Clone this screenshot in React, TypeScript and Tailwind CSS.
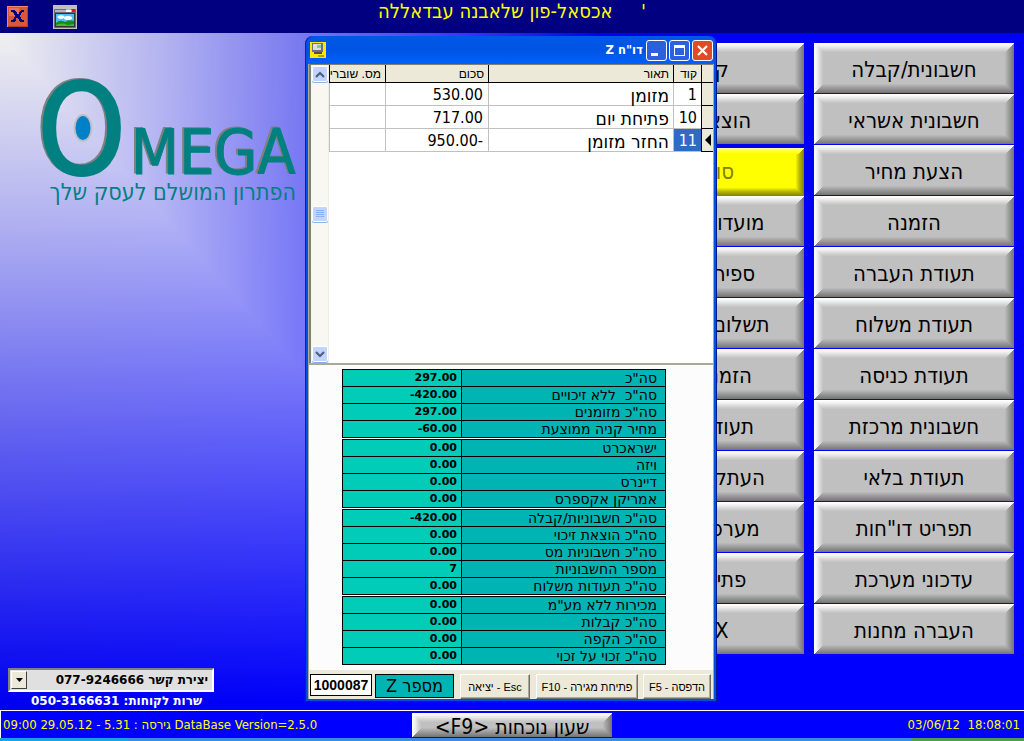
import React from "react";

const bevelGray =
  "bg-[#c0c0c0] shadow-[inset_1px_1px_0_#ffffff,inset_-1px_-1px_0_#777777,inset_2px_2px_0_#f9f9f9,inset_-2px_-2px_0_#7f7f7f,inset_3px_3px_0_#f3f3f3,inset_-3px_-3px_0_#878787,inset_4px_4px_0_#ececec,inset_-4px_-4px_0_#8f8f8f,inset_5px_5px_0_#e4e4e4,inset_-5px_-5px_0_#979797,inset_6px_6px_0_#dcdcdc,inset_-6px_-6px_0_#9f9f9f,inset_7px_7px_0_#d4d4d4,inset_-7px_-7px_0_#a7a7a7,inset_8px_8px_0_#cccccc,inset_-8px_-8px_0_#b0b0b0,inset_9px_9px_0_#c6c6c6,inset_-9px_-9px_0_#b8b8b8]";

const bevelYellow =
  "bg-[#ffff00] shadow-[inset_1px_1px_0_#ffff90,inset_-1px_-1px_0_#868600,inset_2px_2px_0_#ffff70,inset_-2px_-2px_0_#929200,inset_3px_3px_0_#ffff50,inset_-3px_-3px_0_#9e9e00,inset_4px_4px_0_#ffff30,inset_-4px_-4px_0_#aaaa00,inset_5px_5px_0_#ffff18,inset_-5px_-5px_0_#b8b800,inset_6px_6px_0_#ffff00,inset_-6px_-6px_0_#c8c800,inset_-7px_-7px_0_#dada00,inset_-8px_-8px_0_#ecec00]";

const mainMenu = [
  "חשבונית/קבלה",
  "חשבונית אשראי",
  "הצעת מחיר",
  "הזמנה",
  "תעודת העברה",
  "תעודת משלוח",
  "תעודת כניסה",
  "חשבונית מרכזת",
  "תעודת בלאי",
  'תפריט דו"חות',
  "עדכוני מערכת",
  "העברה מחנות",
];

const sideMenu = [
  "קבלה",
  "הוצאת זיכוי",
  "סוף יום",
  "מועדון לקוחות",
  "ספירת מלאי",
  "תשלום לספקים",
  "הזמנת רכש",
  "תעודת ספק",
  "העתקת מסמך",
  "מערכת שעות",
  "פתיחת יום",
  "X דוח",
];

const gridRows = [
  { code: "1", name: "מזומן", sum: "530.00" },
  { code: "10", name: "פתיחת יום", sum: "717.00" },
  { code: "11", name: "החזר מזומן", sum: "950.00-" },
];

const summary: [string, string][][] = [
  [
    ['סה"כ', "297.00"],
    ['סה"כ  ללא זיכויים', "-420.00"],
    ['סה"כ מזומנים', "297.00"],
    ["מחיר קניה ממוצעת", "-60.00"],
  ],
  [
    ["ישראכרט", "0.00"],
    ["ויזה", "0.00"],
    ["דיינרס", "0.00"],
    ["אמריקן אקספרס", "0.00"],
  ],
  [
    ['סה"כ חשבוניות/קבלה', "-420.00"],
    ['סה"כ הוצאת זיכוי', "0.00"],
    ['סה"כ חשבוניות מס', "0.00"],
    ["מספר החשבוניות", "7"],
    ['סה"כ תעודות משלוח', "0.00"],
  ],
  [
    ['מכירות ללא מע"מ', "0.00"],
    ['סה"כ קבלות', "0.00"],
    ['סה"כ הקפה', "0.00"],
    ['סה"כ זכוי על זכוי', "0.00"],
  ],
];

function MenuButton({ label, active }: { label: string; active?: boolean }) {
  return (
    <button
      type="button"
      dir="rtl"
      className={`w-full overflow-hidden whitespace-nowrap text-center text-[22px] leading-6 ${
        active ? `mt-[3px] h-[48px] text-[#808000] ${bevelYellow}` : `h-[50px] pt-1 text-black ${bevelGray}`
      }`}
    >
      {label}
    </button>
  );
}

function MenuColumn({ items, activeIndex }: { items: string[]; activeIndex?: number }) {
  return (
    <ul className="flex w-[200px] flex-col">
      {items.map((label, i) => (
        <li key={label} className="h-[51px]">
          <MenuButton label={label} active={i === activeIndex} />
        </li>
      ))}
    </ul>
  );
}

function TopBar() {
  return (
    <header className="grid h-[33px] grid-cols-[1fr_auto_1fr] bg-[#000080]">
      <div className="flex items-center gap-[25px] pl-[7px]">
        <button type="button" aria-label="יציאה" className="size-[21px]">
          <svg viewBox="0 0 21 21" className="size-full" shapeRendering="crispEdges">
            <rect width="21" height="21" fill="#d8583c" />
            <path d="M0 0h21v1H1v20H0z" fill="#f08a6c" />
            <path d="M20 1h1v20H1v-1h19z" fill="#b83c28" />
            <rect x="2" y="2" width="10" height="8" fill="#e87454" />
            <path
              d="M4 4h4v1h1v1h1v2h2V6h1V5h1V4h3v2h-2v1h-1v2h-1v2h1v2h1v1h2v2h-4v-1h-1v-2h-1v-1h-2v1H9v2H8v1H4v-2h2v-1h1v-2h1V9H7V7H6V6H4z"
              fill="#000080"
            />
          </svg>
        </button>
        <button type="button" aria-label="תמונה" className="h-6 w-6">
          <svg viewBox="0 0 24 24" className="size-full">
            <rect width="24" height="24" fill="#c0c0c0" />
            <rect x="1" y="4" width="22" height="19" rx="1" fill="#6c6c70" />
            <rect x="2" y="5" width="20" height="2" fill="#b8b8b8" />
            <rect x="13" y="4.500" width="5" height="2.500" fill="#fff" />
            <rect x="19" y="4" width="3" height="3" fill="#e01020" />
            <rect x="2.500" y="8.500" width="19" height="13" fill="#fff" stroke="#333" />
            <rect x="3" y="9" width="18" height="9" fill="#50c0f0" />
            <ellipse cx="8" cy="12" rx="3.500" ry="1.800" fill="#fff" />
            <ellipse cx="15" cy="13" rx="4" ry="2" fill="#fff" />
            <path d="M3 18q4-4 9-1q4-3 9-1v5H3z" fill="#188a20" />
            <path d="M3 20q6-3 12 0l6-1v2H3z" fill="#46b830" />
          </svg>
        </button>
      </div>
      <h1 dir="rtl" className="whitespace-pre text-[20px] leading-[22px] text-[#ffff00]">
        {"'     אכסאל-פון שלאבנה עבדאללה"}
      </h1>
      <span />
    </header>
  );
}

function Logo() {
  return (
    <svg viewBox="0 0 270 140" className="h-[140px] w-[270px] overflow-visible" role="img" aria-label="Omega">
      <g
        fontFamily="'DejaVu Sans Condensed','DejaVu Sans',sans-serif"
        fontStretch="condensed"
        fill="#008080"
        stroke="#008080"
        className="drop-shadow-[-2px_-1px_0_#808080]"
      >
        <text x="7" y="108" fontSize="126" strokeWidth="2">O</text>
        <text x="101" y="108" fontSize="62" strokeWidth="1">MEGA</text>
      </g>
      <ellipse cx="53" cy="62" rx="8.500" ry="13" fill="#0080c8" stroke="#c0c0c0" strokeWidth="2" />
    </svg>
  );
}

function Contact() {
  return (
    <div className="w-[206px]">
      <div className="flex h-6 border-2 border-t-[#808080] border-r-white border-b-white border-l-[#808080] bg-[#e0e0e0]">
        <button
          type="button"
          aria-label="פתח רשימה"
          className="m-px flex w-4 items-center justify-center border border-t-white border-r-[#404040] border-b-[#404040] border-l-white bg-[#ece9d8]"
        >
          <svg viewBox="0 0 7 4" className="h-1 w-[7px]">
            <path d="M0 0h7L3.500 4z" fill="#000" />
          </svg>
        </button>
        <input
          aria-label="יצירת קשר"
          dir="rtl"
          readOnly
          defaultValue="יצירת קשר 077-9246666"
          className="min-w-0 flex-1 bg-transparent pr-1 font-['DejaVu_Sans'] text-[12px] font-bold text-black outline-none"
        />
      </div>
      <p dir="rtl" className="pr-3 pl-6 text-center font-['DejaVu_Sans'] text-[12px] leading-[18px] font-bold whitespace-nowrap text-white">
        שרות לקוחות: 050-3166631
      </p>
    </div>
  );
}

function TitleBar() {
  const frame = "flex size-[21px] items-center justify-center rounded-[3px] border border-white";
  return (
    <div className="flex h-7 items-center justify-between rounded-t-lg bg-linear-to-b from-[#0058e6] via-[#0054e3] to-[#0061fc] pr-px pl-0.5">
      <svg viewBox="0 0 16 16" className="size-4" shapeRendering="crispEdges">
        <rect width="16" height="16" fill="#ffe800" />
        <path d="M2 1h11v9H2z" fill="#707070" />
        <path d="M3 2h8v6H3z" fill="#d8e0e0" />
        <path d="M7 3h4v3H7z" fill="#88c890" />
        <path d="M4 10h8v2H4z" fill="#505050" />
        <path d="M8 13h6v2H8z" fill="#b8a000" />
      </svg>
      <div className="flex items-center gap-0.5">
        <h2 dir="rtl" className="pr-px text-[13px] leading-4 font-bold text-white">
          {'דו"ח Z'}
        </h2>
        <button type="button" aria-label="מזעור" className={`${frame} bg-[#2c60e0]`}>
          <svg viewBox="0 0 19 19" className="size-full">
            <path d="M4 12h7v3H4z" fill="#fff" />
          </svg>
        </button>
        <button type="button" aria-label="הגדלה" className={`${frame} bg-[#2c60e0]`}>
          <svg viewBox="0 0 19 19" className="size-full">
            <path d="M4 4h11v11H4zM5 7v7h9V7z" fill="#fff" fillRule="evenodd" />
          </svg>
        </button>
        <button type="button" aria-label="סגירה" className={`${frame} bg-[#e04a28]`}>
          <svg viewBox="0 0 19 19" className="size-full">
            <path d="M5 5l9 9M14 5l-9 9" stroke="#fff" strokeWidth="2.200" />
          </svg>
        </button>
      </div>
    </div>
  );
}

function ScrollBar() {
  const knob =
    "flex h-4 w-4 items-center justify-center rounded-xs border border-white bg-[#c2d3fc] shadow-[0_1px_0_#90b0e8]";
  return (
    <div className="flex w-[18px] flex-col items-center justify-between border-r border-[#eeede5] bg-[#f8f7f2] py-px">
      <button type="button" aria-label="גלילה למעלה" className={knob}>
        <svg viewBox="0 0 10 7" className="h-[7px] w-2.5">
          <path d="M1 6l4-4 4 4" fill="none" stroke="#4d6185" strokeWidth="2.200" />
        </svg>
      </button>
      <div className={knob}>
        <svg viewBox="0 0 8 8" className="size-2" shapeRendering="crispEdges">
          <path d="M0 0h8v1H0zM0 2h8v1H0zM0 4h8v1H0zM0 6h8v1H0z" fill="#8cb0f8" />
        </svg>
      </div>
      <button type="button" aria-label="גלילה למטה" className={knob}>
        <svg viewBox="0 0 10 7" className="h-[7px] w-2.5">
          <path d="M1 1l4 4 4-4" fill="none" stroke="#4d6185" strokeWidth="2.200" />
        </svg>
      </button>
    </div>
  );
}

function PaymentsGrid() {
  const th = "overflow-hidden border-b border-l border-black py-0 pr-1 text-right font-normal whitespace-nowrap";
  const td = "border-b border-l border-[#c0c0c0] px-1 pt-0.5 pb-0 text-right";
  return (
    <div className="flex h-[299px] border-t border-l-2 border-[#808070] bg-white">
      <ScrollBar />
      <div className="flex-1">
        <table dir="rtl" className="w-full table-fixed border-separate border-spacing-0">
          <colgroup>
            <col className="w-3" />
            <col className="w-7" />
            <col />
            <col className="w-[103px]" />
            <col className="w-[56px]" />
          </colgroup>
          <thead className="bg-[#ece9d8] font-['Liberation_Sans'] text-[12px] leading-4">
            <tr className="h-[18px]">
              <th className={th} aria-label="סמן" />
              <th className={th}>קוד</th>
              <th className={th}>תאור</th>
              <th className={th}>סכום</th>
              <th className={th}>מס. שוברי</th>
            </tr>
          </thead>
          <tbody className="text-[16px] leading-5">
            {gridRows.map((row, i) => {
              const current = i === gridRows.length - 1;
              return (
                <tr key={row.code} className="h-[23px]">
                  <td className="border-b border-l border-black bg-[#ece9d8]">
                    {current && (
                      <svg viewBox="0 0 6 12" className="mx-auto h-3 w-1.5">
                        <path d="M6 0v12L0 6z" fill="#000" />
                      </svg>
                    )}
                  </td>
                  <td className={`${td} ${current ? "bg-[#316ac5] text-white" : ""}`}>{row.code}</td>
                  <td className={`${td} text-[19px]`}>{row.name}</td>
                  <td dir="ltr" className={td}>
                    {row.sum}
                  </td>
                  <td className={td} />
                </tr>
              );
            })}
          </tbody>
        </table>
      </div>
    </div>
  );
}

function SummaryTable({ rows }: { rows: [string, string][] }) {
  return (
    <table dir="rtl" className="w-full table-fixed border-collapse leading-4">
      <tbody>
        {rows.map(([label, value]) => (
          <tr key={label} className="h-[17px]">
            <th
              scope="row"
              className="border border-black bg-[#00b4b4] p-0 pr-2 text-right font-['DejaVu_Sans'] text-[14px] font-normal whitespace-pre"
            >
              {label}
            </th>
            <td
              dir="ltr"
              className="w-[119px] border border-black bg-[#00ccb8] p-0 pr-1 text-right font-['DejaVu_Sans'] text-[11px] font-bold"
            >
              {value}
            </td>
          </tr>
        ))}
      </tbody>
    </table>
  );
}

function DialogFooter() {
  const btn =
    "h-[25px] border border-t-white border-r-[#716f64] border-b-[#716f64] border-l-white bg-[#ece9d8] text-center font-['Liberation_Sans'] text-[11px] leading-5 whitespace-nowrap text-black shadow-[inset_-1px_-1px_0_#aca899]";
  return (
    <div className="flex h-[29px] items-start bg-[#ece9d8] pt-1 pr-0.5 pl-px">
      <input
        id="znum"
        readOnly
        defaultValue="1000087"
        className="mr-[3px] h-[22px] w-[62px] border border-black bg-white text-center font-['Liberation_Sans'] text-[14px] font-bold text-black outline-none"
      />
      <label
        htmlFor="znum"
        dir="rtl"
        className="mr-1.5 h-6 w-[79px] border border-black bg-[#00b4b4] text-center text-[18px] leading-[22px]"
      >
        מספר Z
      </label>
      <button type="button" dir="rtl" className={`${btn} mr-1.5 w-[70px]`}>
        Esc - יציאה
      </button>
      <button type="button" dir="rtl" className={`${btn} mr-[5px] w-[102px]`}>
        פתיחת מגירה - F10
      </button>
      <button type="button" dir="rtl" className={`${btn} flex-1`}>
        הדפסה - F5
      </button>
    </div>
  );
}

function ReportDialog() {
  return (
    <section
      role="dialog"
      aria-label='דו"ח Z'
      className="absolute top-[3px] left-[305px] flex w-[412px] flex-col rounded-t-lg bg-[#0050e0] px-[3px] pb-[3px] shadow-[inset_1px_0_0_#0020c0,inset_-1px_-1px_0_#001890]"
    >
      <TitleBar />
      <div className="border-x border-[#aca899] bg-white">
        <PaymentsGrid />
        <div className="flex h-[307px] flex-col gap-px border-t-2 border-[#aca899] bg-[#fcfcfc] pt-1 pr-[47px] pl-[33px]">
          {summary.map((rows, i) => (
            <SummaryTable key={i} rows={rows} />
          ))}
        </div>
        <DialogFooter />
      </div>
    </section>
  );
}

function StatusBar() {
  return (
    <footer>
      <div className="grid h-7 grid-cols-[1fr_200px_1fr] items-center border-t border-white bg-[#0000ff] text-[13px] text-[#ffff00]">
        <p dir="ltr" className="border-l border-white pl-0.5 leading-7 whitespace-nowrap">
          09:00 29.05.12 - 5.31 : גירסה DataBase Version=2.5.0
        </p>
        <button type="button" dir="rtl" className={`h-6 pt-1 text-[21px] leading-5 whitespace-nowrap text-black ${bevelGray}`}>
          {"שעון נוכחות <F9>"}
        </button>
        <p className="pr-1 text-right whitespace-pre">{"03/06/12  18:08:01"}</p>
      </div>
      <div className="flex h-[3px] bg-[#3c8ae8]">
        <span className="w-1/8 bg-[#18a0e8]" />
        <span className="ml-auto w-[112px] bg-[#48a048]" />
      </div>
    </footer>
  );
}

export default function App() {
  return (
    <div className="flex min-h-screen flex-col overflow-hidden bg-[#0000ff] font-['DejaVu_Sans_Condensed','DejaVu_Sans',sans-serif] text-black">
      <TopBar />
      <main className="relative flex flex-1 justify-between bg-[linear-gradient(to_right,#f0f0f0_0px,#b4b4f5_160px,#7777fa_305px,#0000ff_600px),linear-gradient(to_bottom,#f0f0f0_0px,#b4b4f5_180px,#7777fa_342px,#0000ff_670px)] bg-blend-darken">
        <div className="flex flex-col justify-between">
          <div className="w-[296px] pt-[33px]">
            <div className="pl-[30px]">
              <Logo />
            </div>
            <p dir="rtl" className="-mt-7 text-[23px] leading-7 whitespace-nowrap text-[#008080]">
              הפתרון המושלם לעסק שלך
            </p>
          </div>
          <div className="pl-2">
            <Contact />
          </div>
        </div>
        <nav className="flex gap-2.5 pt-2.5 pr-2.5">
          <MenuColumn items={sideMenu} activeIndex={2} />
          <MenuColumn items={mainMenu} />
        </nav>
        <ReportDialog />
      </main>
      <StatusBar />
    </div>
  );
}
